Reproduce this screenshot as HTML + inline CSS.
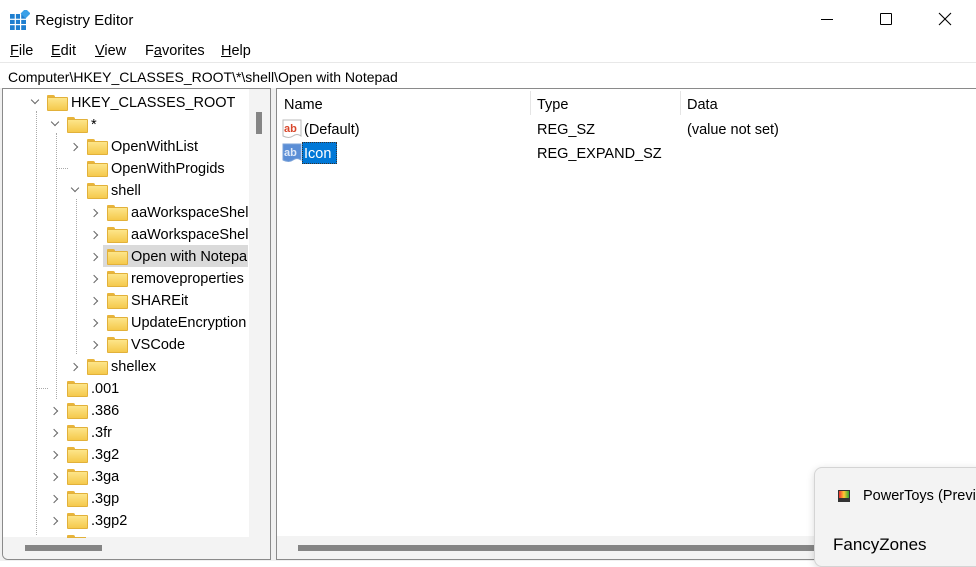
<!DOCTYPE html>
<html><head><meta charset="utf-8"><style>
*{margin:0;padding:0;box-sizing:border-box}
body{width:976px;height:561px;overflow:hidden;background:#fff;font-family:"Liberation Sans",sans-serif;font-size:14px;color:#000;position:relative}
.a{position:absolute;white-space:nowrap}
.fold{position:absolute;width:19px;height:14px}
.fold:before{content:"";position:absolute;left:0;top:0;width:8px;height:4px;background:#e8b43a;border-radius:1px 2px 0 0}
.fold:after{content:"";position:absolute;left:0;top:2px;width:19px;height:12px;background:linear-gradient(#fde58a,#f5c94c);border:1px solid #e2b13a;border-radius:1px}
.chev{position:absolute;width:6px;height:6px;border-right:1.4px solid #666;border-bottom:1.4px solid #666}
.r{transform:rotate(-45deg)}
.d{transform:rotate(45deg)}
.vl{position:absolute;border-left:1px dotted #aaa;width:0}
.hl{position:absolute;border-top:1px dotted #aaa;height:0}
</style></head><body>
<svg class="a" style="left:10px;top:10px" width="20" height="20" viewBox="0 0 20 20">
<rect x="0" y="4" width="16" height="16" fill="#1f7fd0"/>
<g stroke="#fff" stroke-width="1.2"><line x1="5.3" y1="4" x2="5.3" y2="20"/><line x1="10.6" y1="4" x2="10.6" y2="20"/><line x1="0" y1="9.3" x2="16" y2="9.3"/><line x1="0" y1="14.6" x2="16" y2="14.6"/></g>
<rect x="12" y="0" width="7" height="7" fill="#3aa0e8" transform="rotate(45 15.5 3.5)"/>
</svg>
<div class="a" style="left:35px;top:12px;font-size:15px">Registry Editor</div>
<div class="a" style="left:821px;top:19px;width:12px;height:1px;background:#000"></div>
<div class="a" style="left:880px;top:13px;width:12px;height:12px;border:1px solid #000;border-radius:1px"></div>
<svg class="a" style="left:938px;top:12px" width="14" height="14"><path d="M1 1L13 13M13 1L1 13" stroke="#000" stroke-width="1.1"/></svg>
<div class="a" style="left:10px;top:43px;font-size:14.5px"><u>F</u>ile</div>
<div class="a" style="left:51px;top:43px;font-size:14.5px"><u>E</u>dit</div>
<div class="a" style="left:95px;top:43px;font-size:14.5px"><u>V</u>iew</div>
<div class="a" style="left:145px;top:43px;font-size:14.5px">F<u>a</u>vorites</div>
<div class="a" style="left:221px;top:43px;font-size:14.5px"><u>H</u>elp</div>
<div class="a" style="left:0;top:62px;width:976px;height:27px;border-top:1px solid #e8e8e8;background:#fff"></div>
<div class="a" style="left:8px;top:69px;font-size:14px">Computer\HKEY_CLASSES_ROOT\*\shell\Open with Notepad</div>
<div class="a" style="left:0;top:88px;width:976px;height:473px;background:#f0f0f0"></div>
<div class="a" style="left:2px;top:88px;width:269px;height:472px;border:1px solid #8a8a8a;background:#fff;border-radius:0 0 0 6px;overflow:hidden">
 <div class="a" style="left:246px;top:0;width:21px;height:452px;background:#f3f3f3"></div>
 <div class="a" style="left:253px;top:23px;width:6px;height:22px;background:#858585"></div>
 <div class="a" style="left:0;top:448px;width:267px;height:22px;background:#f3f3f3"></div>
 <div class="a" style="left:22px;top:456px;width:77px;height:6px;background:#858585"></div>
</div>
<div class="a" style="left:3px;top:89px;width:245px;height:447px;overflow:hidden">
 <div class="vl" style="left:33px;top:22px;height:430px"></div>
 <div class="vl" style="left:53px;top:44px;height:266px"></div>
 <div class="vl" style="left:73px;top:110px;height:155px"></div>
 <div class="hl" style="left:53px;top:79px;width:12px"></div>
 <div class="hl" style="left:33px;top:299px;width:12px"></div>
 <div class="a" style="left:100px;top:156px;width:146px;height:22px;background:#dadada"></div>
</div>
<div id="tree"></div>
<div class="a" style="left:276px;top:88px;width:700px;height:472px;border:1px solid #8a8a8a;border-right:none;background:#fff"></div>
<div class="a" style="left:530px;top:91px;width:1px;height:24px;background:#e5e5e5"></div>
<div class="a" style="left:680px;top:91px;width:1px;height:24px;background:#e5e5e5"></div>
<div class="a" style="left:284px;top:97px;font-size:14.5px">Name</div>
<div class="a" style="left:537px;top:97px;font-size:14.5px">Type</div>
<div class="a" style="left:687px;top:97px;font-size:14.5px">Data</div>
<svg class="a" style="left:282px;top:119px" width="20" height="20"><path d="M1 1H19V17Q15 14 11 17T1 17Z" fill="#fff" stroke="#bbb"/><text x="2" y="13" font-family="Liberation Sans" font-weight="bold" font-size="11" fill="#d9472b">ab</text></svg>
<div class="a" style="left:304px;top:122px;font-size:14.5px">(Default)</div>
<div class="a" style="left:537px;top:122px;font-size:14.5px">REG_SZ</div>
<div class="a" style="left:687px;top:122px;font-size:14.5px">(value not set)</div>
<svg class="a" style="left:282px;top:143px" width="20" height="20"><path d="M1 1H19V17Q15 14 11 17T1 17Z" fill="#5b8ed6" stroke="#7aa2d8"/><text x="2" y="13" font-family="Liberation Sans" font-weight="bold" font-size="11" fill="#dfe9f8">ab</text></svg>
<div class="a" style="left:302px;top:142px;width:35px;height:22px;background:#0078d7;border:1px dotted #333"></div>
<div class="a" style="left:304px;top:146px;font-size:14.5px;color:#fff">Icon</div>
<div class="a" style="left:537px;top:146px;font-size:14.5px">REG_EXPAND_SZ</div>
<div class="a" style="left:277px;top:536px;width:699px;height:23px;background:#f3f3f3"></div>
<div class="a" style="left:298px;top:545px;width:678px;height:6px;background:#858585"></div>
<div class="a" style="left:814px;top:467px;width:170px;height:100px;background:#f3f3f3;border:1px solid #d4d4d4;border-radius:8px;box-shadow:0 2px 8px rgba(0,0,0,.15)"></div>
<svg class="a" style="left:838px;top:490px" width="12" height="12"><rect width="12" height="12" fill="#333"/><rect x="1" y="1" width="10" height="7" fill="url(#g)"/><defs><linearGradient id="g"><stop offset="0" stop-color="#e33"/><stop offset=".5" stop-color="#fc3"/><stop offset="1" stop-color="#3a3"/></linearGradient></defs></svg>
<div class="a" style="left:863px;top:488px;font-size:14.5px">PowerToys (Previ</div>
<div class="a" style="left:833px;top:535px;font-size:17px">FancyZones</div>
<script>
var rows=[
[0,"HKEY_CLASSES_ROOT","d"],[1,"*","d"],[2,"OpenWithList","r"],[2,"OpenWithProgids",""],[2,"shell","d"],
[3,"aaWorkspaceShel","r"],[3,"aaWorkspaceShel","r"],[3,"Open with Notepa","r"],[3,"removeproperties","r"],
[3,"SHAREit","r"],[3,"UpdateEncryption","r"],[3,"VSCode","r"],[2,"shellex","r"],
[1,".001",""],[1,".386","r"],[1,".3fr","r"],[1,".3g2","r"],[1,".3ga","r"],[1,".3gp","r"],[1,".3gp2","r"]];
var h="";
rows.forEach(function(r,i){
 var cy=102+i*22,lv=r[0];
 var ax=36+lv*20, fx=47+lv*20, tx=71+lv*20;
 if(r[2]=="d")h+='<div class="chev d" style="left:'+(ax-4)+'px;top:'+(cy-5)+'px"></div>';
 if(r[2]=="r")h+='<div class="chev r" style="left:'+(ax-5)+'px;top:'+(cy-2)+'px"></div>';
 h+='<div class="fold" style="left:'+fx+'px;top:'+(cy-7)+'px"></div>';
 h+='<div class="a" style="left:'+tx+'px;top:'+(cy-7)+'px;font-size:14.5px;max-width:'+(248-tx)+'px;overflow:hidden">'+r[1]+'</div>';
});
h+='<div class="fold" style="left:67px;top:535px;clip-path:inset(0 0 11px 0)"></div>';
document.getElementById("tree").innerHTML=h;
</script>
</body></html>
